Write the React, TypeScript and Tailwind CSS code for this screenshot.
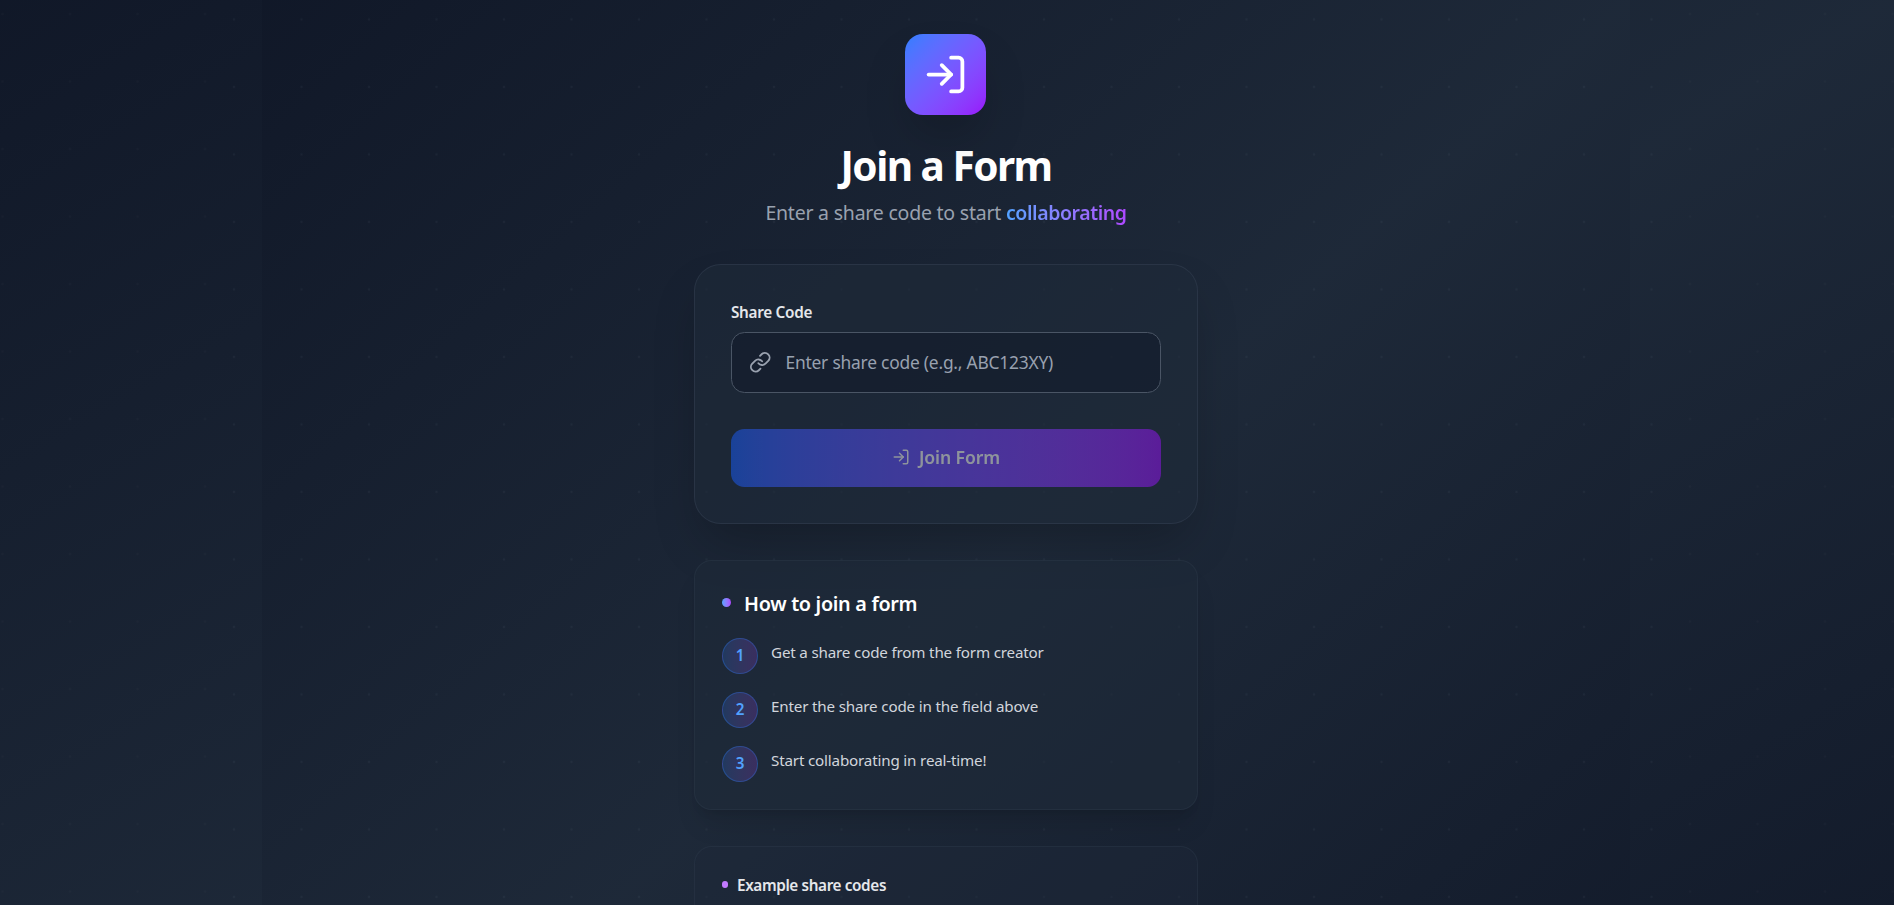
import { LogIn, Link } from "lucide-react";

const steps = [
  "Get a share code from the form creator",
  "Enter the share code in the field above",
  "Start collaborating in real-time!",
];

function Dots({ id, x, y, opacity }: { id: string; x: number; y: number; opacity: number }) {
  return (
    <svg className="h-full w-full" aria-hidden="true">
      <pattern id={id} x={x} y={y} width="67.5" height="67.5" patternUnits="userSpaceOnUse">
        <circle cx="33.75" cy="33.75" r="1.125" fill="#9ca3af" fillOpacity={opacity} />
      </pattern>
      <rect width="100%" height="100%" fill={`url(#${id})`} />
    </svg>
  );
}

export default function App() {
  return (
    <div
      className="relative h-[905px] overflow-hidden text-white"
      style={{ fontFamily: '"Noto Sans", "Open Sans", sans-serif' }}
    >
      <div className="absolute inset-x-0 top-0 h-[1140px] bg-linear-to-br from-gray-900 via-gray-800 to-gray-900">
        <Dots id="outer-dots" x={-31.25} y={-19.75} opacity={0.03} />
      </div>
      <div className="absolute top-0 left-[262px] h-[1215px] w-[1368px] bg-linear-to-br from-gray-900 via-gray-800 to-gray-900" />
      <div className="absolute top-0 left-[228px] h-[1215px] w-[1436px]">
        <Dots id="inner-dots" x={-27.75} y={-14.25} opacity={0.06} />
      </div>
      <main className="relative flex justify-center pr-[2px]">
        <div className="mt-[34px] flex w-[504px] shrink-0 flex-col">
          <div className="relative -left-[0.5px] flex h-[81px] w-[81px] shrink-0 items-center justify-center self-center rounded-[18px] bg-linear-to-br from-blue-500 to-purple-600 shadow-2xl">
            <LogIn size={45} />
          </div>
          <h1 className="mt-[28px] text-center text-[40.5px] leading-[45px] font-bold tracking-[-1.5px] whitespace-nowrap">Join a Form</h1>
          <p className="mt-[9px] text-center text-[19.5px] leading-[31.5px] tracking-[-0.22px] whitespace-nowrap text-gray-400">
            Enter a share code to start{" "}
            <span className="bg-linear-to-r from-blue-400 to-purple-500 bg-clip-text font-semibold tracking-[-0.42px] text-transparent">collaborating</span>
          </p>
          <section className="mt-[35.5px] flex h-[260px] shrink-0 flex-col rounded-[27px] border border-gray-700/50 bg-gray-800/60 p-[36px] pt-[35px] shadow-2xl">
            <label className="mt-[1px] text-[15.3px] leading-[22.5px] font-semibold tracking-[-0.3px] text-gray-200">Share Code</label>
            <div className="mt-[8.5px] flex h-[61px] shrink-0 items-center rounded-[13.5px] border border-gray-600 bg-gray-900/50 px-[17px] text-gray-400">
              <Link size={22.5} />
              <span className="ml-[14px] text-[17.4px] tracking-[-0.22px]">Enter share code (e.g., ABC123XY)</span>
            </div>
            <button className="mt-[35.5px] flex h-[58px] shrink-0 items-center justify-center gap-[9px] rounded-[13.5px] bg-linear-to-r from-blue-600 to-purple-600 pb-[1px] text-[17.6px] font-semibold tracking-[-0.1px] opacity-50">
              <LogIn size={18} />
              Join Form
            </button>
          </section>
          <section className="mt-[36px] flex h-[250px] shrink-0 flex-col rounded-[18px] border border-gray-700/30 bg-gray-800/60 px-[27px] pt-[27px] shadow-xl">
            <h2 className="flex items-center gap-[13px] text-[19.8px] leading-[31.5px] font-semibold tracking-[-0.3px]">
              <i className="relative -top-[1px] h-[9px] w-[9px] rounded-full bg-linear-to-r from-blue-400 to-purple-500" />
              How to join a form
            </h2>
            <ol className="mt-[18px] flex flex-col gap-[18px]">
              {steps.map((s, i) => (
                <li key={s} className="flex h-[36px] gap-[13px] text-[15.2px]">
                  <b className="flex h-[36px] w-[36px] items-center justify-center rounded-full border border-blue-500/30 bg-linear-to-r from-blue-500/20 to-purple-500/20 font-semibold text-blue-400">{i + 1}</b>
                  <span className="pt-[2px] leading-[25px] tracking-[-0.18px] text-gray-300">{s}</span>
                </li>
              ))}
            </ol>
          </section>
          <section className="mt-[36px] h-[140px] shrink-0 rounded-[18px] border border-gray-700/30 bg-gray-800/40 px-[27px] pt-[27px]">
            <h3 className="flex items-center gap-[9px] text-[15.3px] leading-[22.5px] font-semibold tracking-[-0.38px] text-gray-200">
              <i className="relative -top-[1px] h-[7px] w-[6px] rounded-full bg-purple-400" />
              Example share codes
            </h3>
          </section>
        </div>
      </main>
    </div>
  );
}
